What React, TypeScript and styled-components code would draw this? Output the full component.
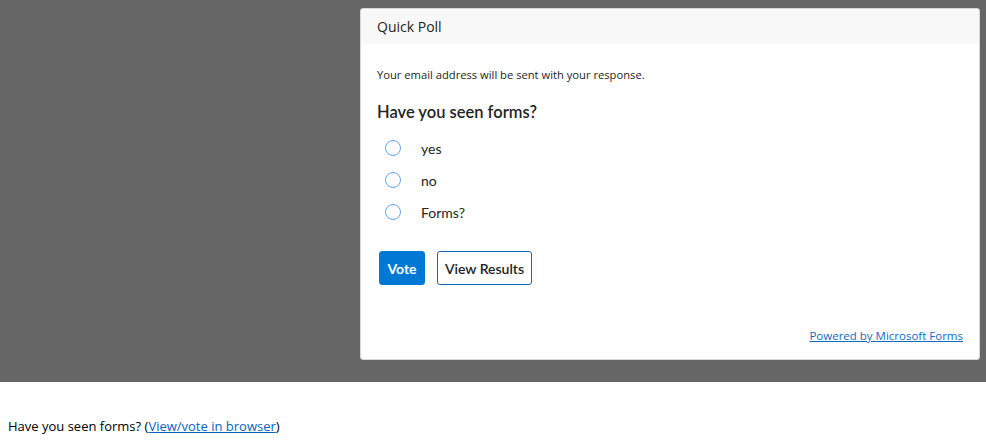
import React from "react";
import styled, { createGlobalStyle } from "styled-components";

const GlobalStyle = createGlobalStyle`
  body {
    margin: 0;
    background: #ffffff;
    font-family: "Segoe UI", "Open Sans", "Noto Sans", sans-serif;
    color: #000;
  }
`;

const options = ["yes", "no", "Forms?"];

const App: React.FC = () => {
  return (
    <>
      <GlobalStyle />
      <Backdrop>
        <Card>
          <CardHeader>Quick Poll</CardHeader>
          <CardBody>
            <Notice>Your email address will be sent with your response.</Notice>
            <Question>Have you seen forms?</Question>
            <OptionList>
              {options.map((o) => (
                <Option key={o}>
                  <Radio />
                  <OptionLabel>{o}</OptionLabel>
                </Option>
              ))}
            </OptionList>
            <Actions>
              <PrimaryButton>Vote</PrimaryButton>
              <SecondaryButton>View Results</SecondaryButton>
            </Actions>
          </CardBody>
          <CardFooter>
            <FooterLink href="#">Powered by Microsoft Forms</FooterLink>
          </CardFooter>
        </Card>
      </Backdrop>
      <Fallback>
        Have you seen forms? (<BrowserLink href="#">View/vote in browser</BrowserLink>)
      </Fallback>
    </>
  );
};

export default App;

const Backdrop = styled.div`
  height: 382px;
  box-sizing: border-box;
  background: #666666;
  display: flex;
  justify-content: flex-end;
  align-items: flex-start;
  padding: 8px 6px 0 0;
`;

const Card = styled.div`
  width: 620px;
  height: 352px;
  box-sizing: border-box;
  background: #ffffff;
  border: 1px solid #d6d6d6;
  border-radius: 3px;
  display: flex;
  flex-direction: column;
  overflow: hidden;
`;

const CardHeader = styled.div`
  height: 35px;
  flex: none;
  background: #f8f8f8;
  padding: 0 16px;
  display: flex;
  align-items: center;
  font-size: 14px;
  color: #252423;
`;

const CardBody = styled.div`
  flex: 1;
  padding: 23px 16px 0 16px;
  display: flex;
  flex-direction: column;
`;

const Notice = styled.div`
  font-size: 11.2px;
  color: #252423;
  line-height: 16px;
`;

const Question = styled.div`
  margin-top: 17px;
  font-family: "Lato", "Segoe UI", sans-serif;
  font-size: 16.5px;
  font-weight: 600;
  color: #252423;
  line-height: 24px;
`;

const OptionList = styled.div`
  margin-top: 8px;
  display: flex;
  flex-direction: column;
`;

const Option = styled.label`
  height: 32px;
  display: flex;
  align-items: center;
  padding-left: 8px;
`;

const Radio = styled.span`
  width: 16px;
  height: 16px;
  box-sizing: border-box;
  border: 1.6px solid #62a6e8;
  border-radius: 50%;
  flex: none;
`;

const OptionLabel = styled.span`
  margin-left: 20px;
  font-family: "Lato", "Segoe UI", sans-serif;
  font-size: 14px;
  color: #252423;
`;

const Actions = styled.div`
  margin-top: 23px;
  display: flex;
  gap: 12px;
  padding-left: 2px;
`;

const ButtonBase = styled.button`
  height: 34px;
  box-sizing: border-box;
  border-radius: 3px;
  font-family: "Lato", "Segoe UI", sans-serif;
  font-size: 14px;
  padding: 0;
  white-space: nowrap;
  cursor: pointer;
`;

const PrimaryButton = styled(ButtonBase)`
  width: 46px;
  background: #0078d4;
  border: 1px solid #0078d4;
  color: #ffffff;
  font-weight: 700;
`;

const SecondaryButton = styled(ButtonBase)`
  width: 95px;
  background: #ffffff;
  border: 1px solid #0f6cbd;
  color: #252423;
  font-weight: 600;
`;

const CardFooter = styled.div`
  display: flex;
  justify-content: flex-end;
  padding: 0 16px 16px 16px;
`;

const FooterLink = styled.a`
  font-size: 11.5px;
  color: #0f6cbd;
  text-decoration: underline;
`;

const Fallback = styled.div`
  margin-top: 35px;
  padding-left: 8px;
  font-size: 13px;
  color: #000000;
`;

const BrowserLink = styled.a`
  color: #0563c1;
  text-decoration: underline;
`;
